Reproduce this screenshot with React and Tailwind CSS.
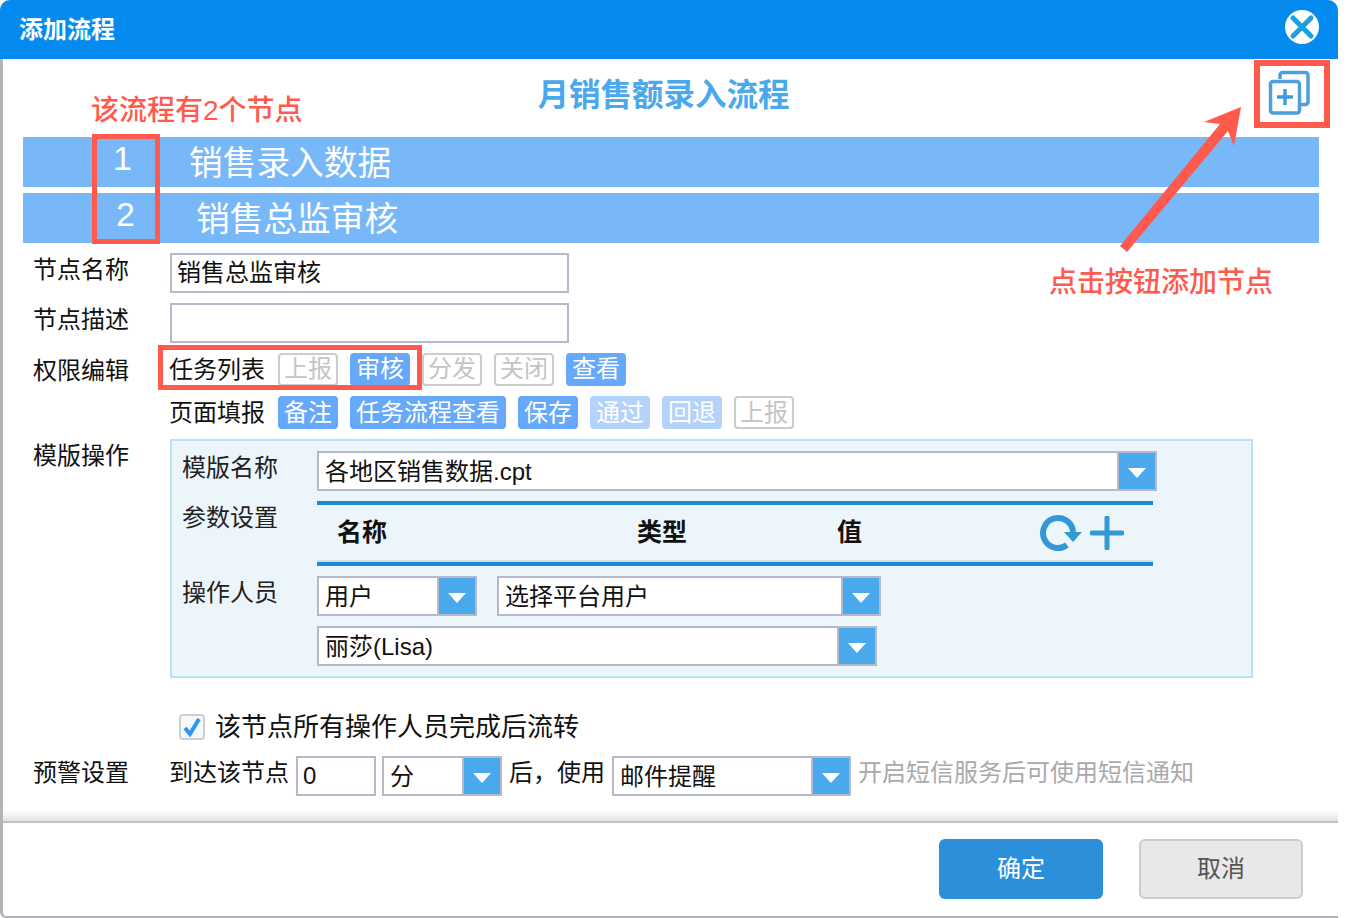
import React from "react";

const Label = ({ children, className = "" }) => (
  <div className={`w-[147px] shrink-0 pl-[10px] text-[24px] leading-[34px] text-[#111] ${className}`}>{children}</div>
);

const PanelLabel = ({ children, className = "" }) => (
  <div className={`w-[135px] shrink-0 text-[24px] leading-[34px] text-[#222] ${className}`}>{children}</div>
);

const Select = ({ value, className = "" }) => (
  <div className={`flex h-[40px] items-stretch border-2 border-[#b6b9cc] bg-white ${className}`}>
    <div className="flex-1 truncate pl-[6px] text-[24px] leading-[38px] text-[#111]">{value}</div>
    <div className="flex w-[38px] shrink-0 items-center justify-center border-l-2 border-[#b6b9cc] bg-[#4aa8ec]">
      <svg width="20" height="12" viewBox="0 0 20 12" className="mt-[4px]">
        <polygon points="1,1 19,1 10,11" fill="#fff" />
      </svg>
    </div>
  </div>
);

const Badge = ({ children, kind = "on" }) => {
  const styles = {
    on: "px-[6px] bg-[#66a8f9] text-white",
    light: "px-[6px] bg-[#b3d3fb] text-white",
    off: "px-[4px] border-2 border-[#cccccc] text-[#c4c4c4]",
  };
  return (
    <span className={`flex h-[33px] items-center justify-center rounded-[4px] text-[24px] leading-none ${styles[kind]}`}>
      {children}
    </span>
  );
};

const Input = ({ value = "", className = "" }) => (
  <div className={`h-[40px] border-2 border-[#b6b9cc] bg-white pl-[5px] text-[24px] leading-[36px] text-[#111] ${className}`}>{value}</div>
);

export default function App() {
  return (
    <div className="relative h-[918px] w-[1354px] overflow-hidden bg-white font-['Liberation_Sans','Noto_Sans_CJK_SC',sans-serif]">
      <div className="flex h-[918px] w-[1338px] flex-col rounded-t-[10px] rounded-bl-[6px] border-b-2 border-l-[3px] border-[#b2b4b8] bg-white">
        <div className="-ml-[3px] flex h-[59px] shrink-0 items-center justify-between rounded-t-[10px] bg-[#058bef] pl-[19px] pr-[19px]">
          <span className="text-[24px] font-bold leading-none text-white">添加流程</span>
          <svg width="34" height="34" viewBox="0 0 34 34" className="-mt-[5px]">
            <circle cx="17" cy="17" r="17" fill="#fff" />
            <path d="M8 8 L26 26 M26 8 L8 26" stroke="#1a9fe0" strokeWidth="5" strokeLinecap="round" />
          </svg>
        </div>

        <div className="-ml-[3px] mt-[16px] h-[40px] pr-[11px] text-center text-[31.5px] font-bold leading-[40px] text-[#4aa8ec]">
          月销售额录入流程
        </div>

        <div className="ml-[20px] mt-[22px] flex w-[1296px] flex-col gap-[6px]">
          <div className="flex h-[50px] items-center bg-[#78b8f9] pl-[90px] text-white">
            <span className="mb-[8px] w-[76px] text-[34px] leading-none">1</span>
            <span className="mt-[4px] text-[33.7px] leading-none">销售录入数据</span>
          </div>
          <div className="flex h-[50px] items-center bg-[#78b8f9] pl-[93px] text-white">
            <span className="mb-[8px] w-[80px] text-[34px] leading-none">2</span>
            <span className="mt-[4px] text-[33.7px] leading-none">销售总监审核</span>
          </div>
        </div>

        <div className="ml-[20px] mt-[10px] flex">
          <Label>节点名称</Label>
          <Input value="销售总监审核" className="w-[399px]" />
        </div>
        <div className="ml-[20px] mt-[10px] flex">
          <Label>节点描述</Label>
          <Input className="w-[399px]" />
        </div>
        <div className="ml-[20px] mt-[9px] flex items-center">
          <Label className="translate-y-[2px]">权限编辑</Label>
          <div className="flex items-center gap-[12px]">
            <span className="-ml-[1px] mr-[1px] translate-y-[1px] text-[24px] leading-none text-[#111]">任务列表</span>
            <Badge kind="off">上报</Badge>
            <Badge>审核</Badge>
            <Badge kind="off">分发</Badge>
            <Badge kind="off">关闭</Badge>
            <Badge>查看</Badge>
          </div>
        </div>
        <div className="ml-[20px] mt-[10px] flex items-center">
          <div className="w-[147px] shrink-0" />
          <div className="flex items-center gap-[12px]">
            <span className="-ml-[1px] mr-[1px] text-[24px] leading-none text-[#111]">页面填报</span>
            <Badge>备注</Badge>
            <Badge>任务流程查看</Badge>
            <Badge>保存</Badge>
            <Badge kind="light">通过</Badge>
            <Badge kind="light">回退</Badge>
            <Badge kind="off">上报</Badge>
          </div>
        </div>

        <div className="ml-[20px] mt-[10px] flex items-start">
          <Label>模版操作</Label>
          <div className="h-[239px] w-[1083px] border-2 border-[#b8e2f0] bg-[#ecf5f9] pl-[10px] pt-[10px]">
            <div className="flex">
              <PanelLabel>模版名称</PanelLabel>
              <Select value="各地区销售数据.cpt" className="w-[840px]" />
            </div>
            <div className="mt-[10px] flex">
              <PanelLabel>参数设置</PanelLabel>
              <div className="h-[65px] w-[836px] border-b-4 border-t-4 border-[#1c8ad0]">
                <div className="flex h-[57px] items-center border-b-2 border-[#dddddd] pl-[20px] text-[25px] font-bold leading-none text-[#111]">
                  <span className="w-[300px]">名称</span>
                  <span className="w-[200px]">类型</span>
                  <span className="w-[202px]">值</span>
                  <svg width="44" height="38" viewBox="0 0 44 38" fill="none">
                    <path d="M28 31 A15 15 0 1 1 34 18" stroke="#3398d3" strokeWidth="6" />
                    <polygon points="25,18 43,18 34,28" fill="#3398d3" />
                  </svg>
                  <svg width="34" height="34" viewBox="0 0 34 34" className="ml-[7px]">
                    <path d="M17 2 V32 M2 17 H32" stroke="#3398d3" strokeWidth="5" strokeLinecap="round" />
                  </svg>
                </div>
              </div>
            </div>
            <div className="mt-[10px] flex">
              <PanelLabel>操作人员</PanelLabel>
              <div className="flex gap-[20px]">
                <Select value="用户" className="w-[160px]" />
                <Select value="选择平台用户" className="w-[384px]" />
              </div>
            </div>
            <div className="mt-[10px] flex">
              <PanelLabel />
              <Select value="丽莎(Lisa)" className="w-[560px]" />
            </div>
          </div>
        </div>

        <div className="ml-[176px] mt-[36px] flex h-[26px] items-center gap-[10px]">
          <div className="flex h-[26px] w-[26px] items-center justify-center rounded-[4px] border-2 border-[#cfcfcf] bg-[#f4f7fb]">
            <svg width="18" height="20" viewBox="0 0 18 20" fill="none">
              <path d="M2 11 L7 17 L16 2" stroke="#2f95ef" strokeWidth="4" />
            </svg>
          </div>
          <span className="text-[26px] leading-none text-[#111]">该节点所有操作人员完成后流转</span>
        </div>

        <div className="ml-[20px] mt-[16px] flex">
          <Label>预警设置</Label>
          <span className="-ml-[1px] mr-[7px] text-[24px] leading-[34px] text-[#111]">到达该节点</span>
          <Input value="0" className="w-[80px]" />
          <Select value="分" className="ml-[6px] w-[120px]" />
          <span className="ml-[7px] mr-[7px] text-[24px] leading-[34px] text-[#111]">后，使用</span>
          <Select value="邮件提醒" className="w-[239px]" />
          <span className="ml-[7px] text-[24px] leading-[34px] text-[#aaaaaa]">开启短信服务后可使用短信通知</span>
        </div>

        <div className="mt-auto h-[11px] bg-gradient-to-b from-white to-[#e2e2e2]" />
        <div className="flex h-[95px] shrink-0 items-start justify-end gap-[36px] border-t-2 border-[#c0c0c0] pr-[35px] pt-[16px]">
          <div className="flex h-[60px] w-[164px] items-center justify-center rounded-[6px] bg-[#2b90d9] text-[24px] leading-none text-white">确定</div>
          <div className="flex h-[60px] w-[164px] items-center justify-center rounded-[6px] border-2 border-[#cccccc] bg-[#e8e8e8] text-[24px] leading-none text-[#555]">取消</div>
        </div>
      </div>

      {/* annotations */}
      <div className="absolute left-[91px] top-[95px] text-[28px] font-medium leading-[32px] text-[#ff5a4d]">该流程有2个节点</div>
      <div className="absolute left-[92px] top-[134px] h-[110px] w-[68px] border-[5px] border-[#ff5a4d]" />
      <div className="absolute left-[158px] top-[345px] h-[45px] w-[264px] border-[5px] border-[#ff5a4d]" />
      <div className="absolute left-[1254px] top-[60px] h-[68px] w-[76px] border-[6px] border-[#ff5a4d]" />
      <svg className="absolute left-[1264px] top-[66px]" width="50" height="54" viewBox="0 0 50 54" fill="none">
        <path d="M16 13 V9 a2.5 2.5 0 0 1 2.5 -2.5 H41.5 a2.5 2.5 0 0 1 2.5 2.5 V36 a2.5 2.5 0 0 1 -2.5 2.5 H36" stroke="#4e9fdc" strokeWidth="3.5" />
        <rect x="6.5" y="15.5" width="29" height="31.5" rx="2.5" stroke="#4e9fdc" strokeWidth="3.5" />
        <path d="M21 23 V39 M13 31 H29" stroke="#3f9bdc" strokeWidth="3.5" />
      </svg>
      <svg className="absolute left-[1110px] top-[100px]" width="140" height="160" viewBox="1110 100 140 160">
        <polygon points="1241,107 1234,146 1228,131 1127,252 1120,246 1220,124 1204,122" fill="#ff5a4d" />
      </svg>
      <div className="absolute left-[1049px] top-[267px] text-[28px] font-medium leading-[32px] text-[#ff5a4d]">点击按钮添加节点</div>
    </div>
  );
}
